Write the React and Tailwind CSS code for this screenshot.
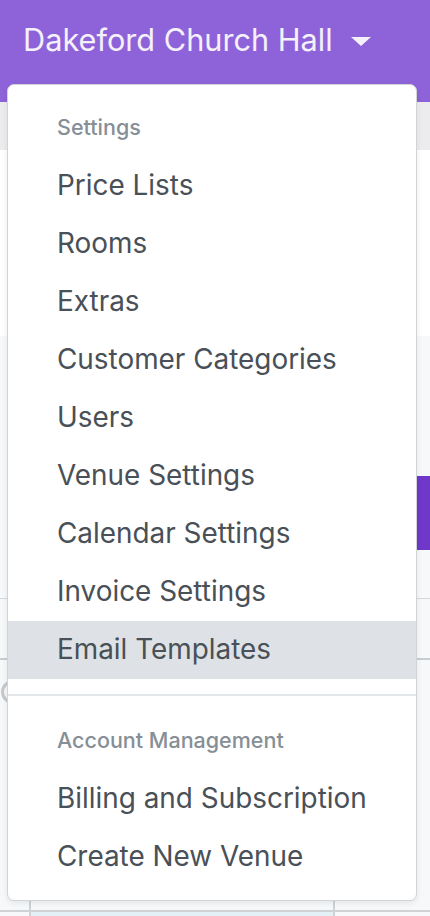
import React from "react";

const items = [
  "Price Lists",
  "Rooms",
  "Extras",
  "Customer Categories",
  "Users",
  "Venue Settings",
  "Calendar Settings",
  "Invoice Settings",
  "Email Templates",
];

export default function App() {
  const font = { fontFamily: "Inter, 'Noto Sans', 'Liberation Sans', sans-serif" };
  return (
    <div className="relative w-[430px] h-[916px] overflow-hidden bg-[#f7f8f9]" style={font}>
      {/* Background page */}
      <div className="h-[102px] bg-[#8e63d9] flex items-start pl-[23px] pt-[17px]">
        <span className="text-[30.7px] leading-[46px] text-[#f4f1fb]">Dakeford Church Hall</span>
        <span className="ml-[18px] mt-[20px] w-0 h-0 border-l-[10px] border-r-[10px] border-t-[9px] border-l-transparent border-r-transparent border-t-[#f4f1fb]"></span>
      </div>
      <div className="h-[48px] bg-[#ececee]"></div>
      <div className="h-[186px] bg-white"></div>
      <div className="pt-[140px]">
        <div className="flex justify-end">
          <div className="w-[140px] h-[74px] bg-[#6f38cb]"></div>
        </div>
        <div className="h-[48px]"></div>
        <div className="h-[60px] border-t border-[#d6d9dc]"></div>
        <div className="border-t-2 border-[#c9cdd1]"></div>
        <div className="flex">
          <div className="w-[29px] relative">
            <div className="absolute left-[1px] top-[20px] w-[24px] h-[24px] rounded-full border-[3px] border-[#c6c9cc]"></div>
          </div>
          <div className="w-[306px] h-[250px] border-x-2 border-[#cfd3d6]"></div>
        </div>
        <div className="border-t-2 border-[#cfd3d6]"></div>
        <div className="flex">
          <div className="w-[29px]"></div>
          <div className="w-[306px] h-[10px] border-x-2 border-[#cfd3d6] bg-[#e3f1f6]"></div>
        </div>
      </div>

      {/* Dropdown */}
      <div className="absolute left-[7px] top-[84px] w-[410px] h-[817px] bg-white border-[1.5px] border-[#d2d5d8] rounded-[7px] shadow-[0_2px_6px_rgba(0,0,0,0.08)] py-[13px]">
        <div className="h-[59px] flex items-center pl-[49px] text-[21.5px] font-medium text-[#868e96]">
          Settings
        </div>
        {items.map((t) => (
          <div
            key={t}
            className={
              "h-[58px] flex items-center pl-[49px] text-[27.9px] text-[#495057] " +
              (t === "Email Templates" ? "bg-[#dee2e6]" : "")
            }
          >
            {t}
          </div>
        ))}
        <div className="mt-[15px] mb-[15px] border-t-2 border-[#e4e7ea]"></div>
        <div className="h-[59px] flex items-center pl-[49px] text-[21.5px] font-medium text-[#868e96]">
          Account Management
        </div>
        {["Billing and Subscription", "Create New Venue"].map((t) => (
          <div key={t} className="h-[58px] flex items-center pl-[49px] text-[27.9px] text-[#495057]">
            {t}
          </div>
        ))}
      </div>
    </div>
  );
}
